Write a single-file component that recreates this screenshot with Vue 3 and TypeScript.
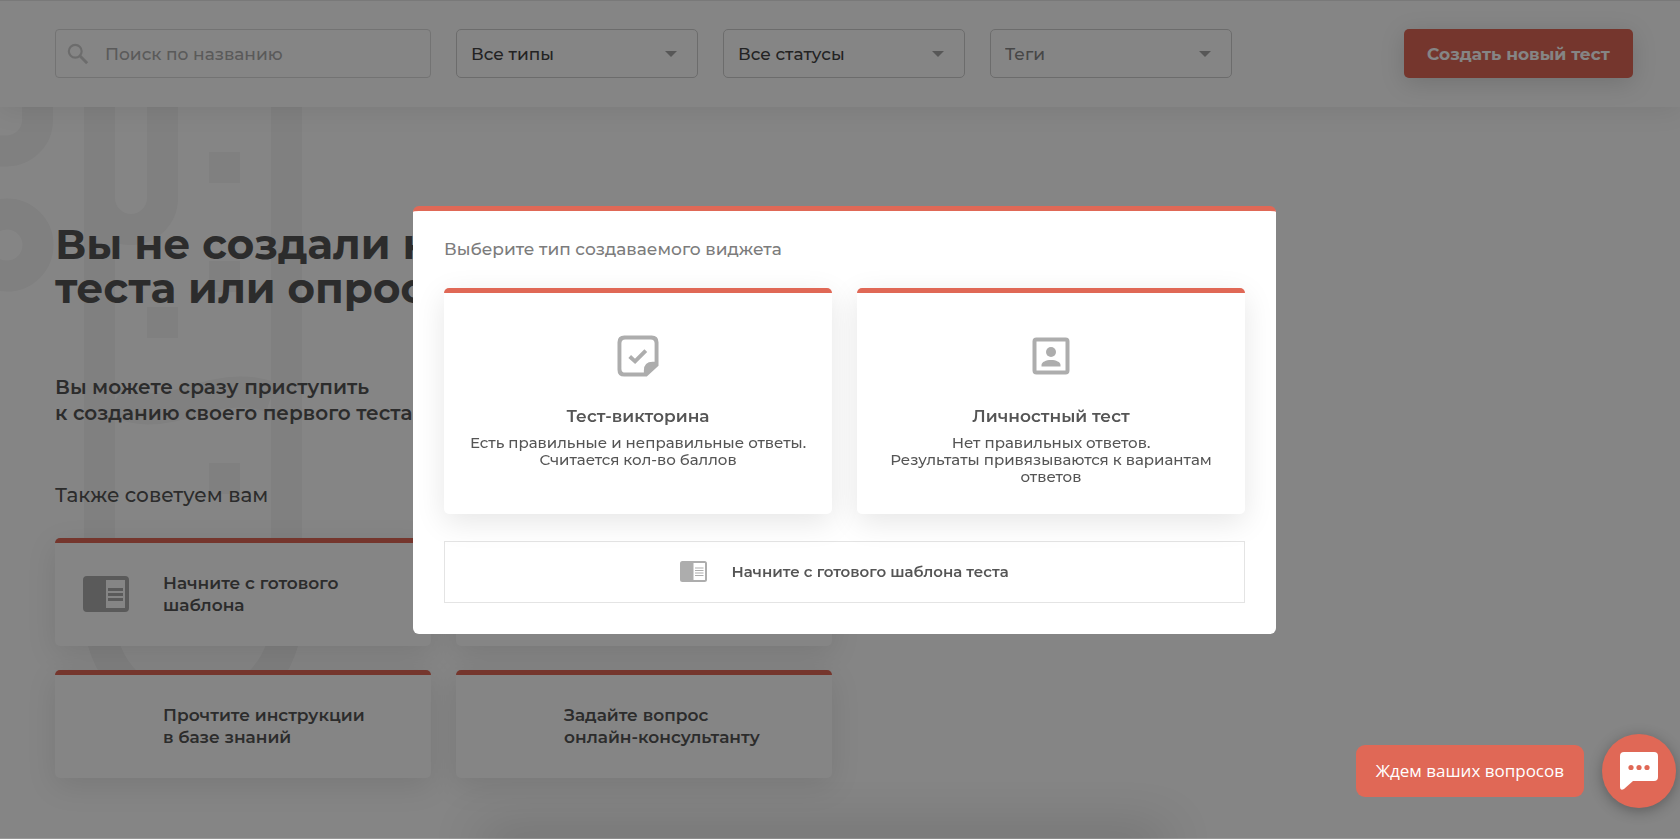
<script setup lang="ts">
import { ref } from 'vue'

interface Tip {
  lines: string[]
  icon: boolean
}
interface WidgetType {
  id: string
  title: string
  lines: string[]
}

const search = ref('')
const filters = [
  { id: 'types', label: 'Тип', value: 'Все типы', muted: false },
  { id: 'statuses', label: 'Статус', value: 'Все статусы', muted: false },
  { id: 'tags', label: 'Теги', value: 'Теги', muted: true },
]
const tips: Tip[] = [
  { lines: ['Начните с готового', 'шаблона'], icon: true },
  { lines: [], icon: false },
  { lines: ['Прочтите инструкции', 'в базе знаний'], icon: false },
  { lines: ['Задайте вопрос', 'онлайн-консультанту'], icon: false },
]
const widgetTypes: WidgetType[] = [
  {
    id: 'quiz',
    title: 'Тест-викторина',
    lines: ['Есть правильные и неправильные ответы.', 'Считается кол-во баллов'],
  },
  {
    id: 'personality',
    title: 'Личностный тест',
    lines: ['Нет правильных ответов.', 'Результаты привязываются к вариантам', 'ответов'],
  },
]
</script>

<template>
  <div class="page">
    <header class="toolbar">
      <div class="filters">
        <label class="search">
          <svg viewBox="0 0 24 24" aria-hidden="true">
            <circle cx="9" cy="9" r="7" fill="none" stroke="currentColor" stroke-width="2.4" />
            <path d="M14 14 L22 22" stroke="currentColor" stroke-width="3.2" />
          </svg>
          <input v-model="search" type="text" placeholder="Поиск по названию" aria-label="Поиск по названию" />
        </label>
        <div v-for="f in filters" :key="f.id" class="select">
          <select :id="f.id" :aria-label="f.label" :class="{ muted: f.muted }">
            <option>{{ f.value }}</option>
          </select>
          <svg viewBox="0 0 12 6" aria-hidden="true"><path d="M0 0H12L6 6Z" fill="currentColor" /></svg>
        </div>
      </div>
      <button type="button" class="create">Создать новый тест</button>
    </header>

    <main class="content">
      <svg class="pattern" viewBox="0 0 320 732" aria-hidden="true">
        <g fill="none" stroke="currentColor" stroke-width="31">
          <path d="M99.5 0V510A93.5 93.5 0 0 0 286.5 510V0" />
          <path d="M162.5 0V91A31.5 31.5 0 0 1 99.5 91" />
          <path d="M37.5 0V13A31 31 0 0 1 7 44H0" />
          <circle cx="7" cy="138" r="31" />
          <path d="M115 294Q131 302 148 302C182 302 206 285 240 285Q256 285 271 290" />
        </g>
        <path d="M209 45h31v31h-31zM209 154h31v31h-31zM147 200h31v31h-31zM209 356h31v31h-31z" fill="currentColor" />
      </svg>
      <h1>Вы не создали ни одного<br />теста или опроса</h1>
      <p class="lead">Вы можете сразу приступить<br />к созданию своего первого теста</p>
      <h2>Также советуем вам</h2>
      <div class="tips">
        <a v-for="(tip, i) in tips" :key="i" href="#" class="tip">
          <span class="tip-icon">
            <svg v-if="tip.icon" viewBox="0 0 46 36" aria-hidden="true">
              <path
                fill-rule="evenodd"
                fill="currentColor"
                d="M4 0H42Q46 0 46 4V32Q46 36 42 36H4Q0 36 0 32V4Q0 0 4 0ZM23 4V32H42V4ZM25 12H40V15H25ZM25 17H40V20H25ZM25 22H40V25H25Z"
              />
            </svg>
          </span>
          <span class="tip-text"><span v-for="line in tip.lines" :key="line">{{ line }}</span></span>
        </a>
      </div>
    </main>
  </div>

  <div class="overlay">
    <section class="modal" role="dialog" aria-modal="true" aria-labelledby="modal-title">
      <h3 id="modal-title">Выберите тип создаваемого виджета</h3>
      <div class="types">
        <button v-for="t in widgetTypes" :key="t.id" type="button" class="type">
          <svg v-if="t.id === 'quiz'" class="type-icon" viewBox="-0.5 -0.5 43 43" aria-hidden="true">
            <path
              fill="currentColor"
              fill-rule="evenodd"
              d="M7 0H35Q42 0 42 7V31L30 42H7Q0 42 0 35V7Q0 0 7 0ZM8 4Q4 4 4 8V34Q4 38 8 38H27V36Q27 27 36 27H38V8Q38 4 34 4Z"
            />
            <path d="M12.5 21.5L18 26.5L29 15.5" fill="none" stroke="currentColor" stroke-width="4" />
          </svg>
          <svg v-else class="type-icon" viewBox="0 0 42 42" aria-hidden="true">
            <rect x="4.5" y="4.5" width="33" height="33" rx="2" fill="none" stroke="currentColor" stroke-width="4" />
            <circle cx="21" cy="17" r="5" fill="currentColor" />
            <path d="M11.500 31.500V30C11.500 27 16 25 21 25S30.500 27 30.500 30V31.500Z" fill="currentColor" />
          </svg>
          <strong>{{ t.title }}</strong>
          <span v-for="line in t.lines" :key="line" class="type-line">{{ line }}</span>
        </button>
      </div>
      <button type="button" class="template">
        <svg viewBox="0 0 27 21" aria-hidden="true">
          <path
            fill-rule="evenodd"
            fill="currentColor"
            d="M2.500 0H24.500Q27 0 27 2.500V18.500Q27 21 24.500 21H2.500Q0 21 0 18.500V2.500Q0 0 2.500 0ZM13.500 2V19H25V2ZM15 6.500H23.500V7.500H15ZM15 9H23.500V10H15ZM15 11.500H23.500V12.500H15ZM15 14H23.500V15H15Z"
          />
        </svg>
        Начните с готового шаблона теста
      </button>
    </section>
  </div>

  <div class="dock-shadow"></div>

  <div class="chat">
    <span class="chat-hint">Ждем ваших вопросов</span>
    <button type="button" class="chat-button" aria-label="Открыть чат">
      <svg viewBox="0 0 38 38" aria-hidden="true">
        <path d="M4 0H34Q38 0 38 4V25Q38 29 34 29H13L4 37Q0 39 0 35V4Q0 0 4 0Z" fill="#fff" />
        <g fill="#e06856">
          <circle cx="11" cy="15.500" r="2.600" />
          <circle cx="19" cy="15.500" r="2.600" />
          <circle cx="27" cy="15.500" r="2.600" />
        </g>
      </svg>
    </button>
  </div>
</template>

<style>
body {
  margin: 0;
  background: #fff;
  overflow: hidden;
}
</style>

<style scoped>
.page,
.overlay {
  font-family: Montserrat, Inter, 'Noto Sans', sans-serif;
  color: #555;
}
.page *,
.overlay *,
.chat * {
  box-sizing: border-box;
}
button,
input,
select {
  font: inherit;
  color: inherit;
}
.page {
  height: 100vh;
  display: flex;
  flex-direction: column;
  overflow: hidden;
}
.toolbar {
  position: relative;
  z-index: 1;
  display: flex;
  align-items: center;
  justify-content: space-between;
  gap: 24px;
  padding: 28px 47px 29px 55px;
  border-top: 1px solid #e8e8e8;
  background: #fff;
  box-shadow: 0 4px 24px rgba(0, 0, 0, 0.08);
}
.filters {
  flex: 0 1 1177px;
  display: grid;
  grid-template-columns: 376fr 242fr 242fr 242fr;
  gap: 25px;
}
.search,
.select {
  position: relative;
  display: flex;
  align-items: center;
  height: 49px;
  border: 1px solid #dcdcdc;
  border-radius: 4px;
  font-size: 17px;
  font-weight: 500;
}
.search {
  gap: 16px;
  padding-left: 11px;
  color: #d0d0d0;
}
.search svg {
  flex: none;
  width: 22px;
  height: 22px;
}
.search input {
  flex: 1;
  min-width: 0;
  border: 0;
  outline: 0;
  background: none;
  padding: 0;
}
.search input::placeholder {
  color: #acacac;
  opacity: 1;
}
.select {
  border-color: #d0d0d0;
  border-radius: 5px;
}
.select select {
  width: 100%;
  height: 100%;
  padding: 0 40px 0 14px;
  border: 0;
  appearance: none;
  background: none;
  color: #444;
}
.select select.muted {
  color: #888;
}
.select svg {
  position: absolute;
  right: 20px;
  width: 12px;
  height: 6px;
  color: #a8a8a8;
  pointer-events: none;
}
.create {
  width: 229px;
  height: 49px;
  border: 0;
  border-radius: 5px;
  background: #e06856;
  box-shadow: 0 5px 24px rgba(0, 0, 0, 0.15);
  color: #fff;
  font-size: 17px;
  font-weight: 700;
  white-space: nowrap;
}
.content {
  position: relative;
  flex: 1;
  padding: 115px 56px 0 55px;
}
.pattern {
  position: absolute;
  left: 0;
  top: 0;
  width: 320px;
  height: 732px;
  color: #f5f5f5;
}
.content > :not(.pattern) {
  position: relative;
}
h1 {
  margin: 0;
  font-size: 42px;
  line-height: 44px;
  font-weight: 700;
}
.lead {
  margin: 64px 0 0;
  font-size: 20px;
  line-height: 26px;
  font-weight: 600;
}
h2 {
  margin: 56px 0 0;
  font-size: 20px;
  line-height: 26px;
  font-weight: 500;
}
.tips {
  display: grid;
  grid-template-columns: repeat(2, minmax(0, 376px));
  gap: 24px 25px;
  margin-top: 30px;
}
.tip {
  display: flex;
  align-items: center;
  height: 108px;
  border-top: 5px solid #e06856;
  border-radius: 5px;
  background: #fff;
  box-shadow: 0 8px 30px rgba(0, 0, 0, 0.1);
  padding: 0 28px 2px;
  color: inherit;
  text-decoration: none;
  font-size: 17px;
  line-height: 22px;
  font-weight: 600;
}
.tip-icon {
  flex: none;
  width: 80px;
  color: #adadad;
}
.tip-icon svg {
  display: block;
  width: 46px;
  height: 36px;
}
.tip-text {
  display: grid;
}
.overlay {
  position: fixed;
  inset: 0;
  z-index: 2;
  display: flex;
  align-items: center;
  justify-content: center;
  padding: 2px 0 0 9px;
  border-bottom: 1px solid rgba(255, 255, 255, 0.15);
  background: rgba(0, 0, 0, 0.48);
}
.modal {
  width: 863px;
  padding: 26px 31px 31px;
  border-top: 5px solid #e06856;
  border-radius: 6px;
  background: #fff;
}
h3 {
  margin: 0;
  font-size: 17px;
  line-height: 24px;
  font-weight: 500;
  color: #7c7c7c;
}
.types {
  display: grid;
  grid-template-columns: 1fr 1fr;
  gap: 25px;
  margin: 27px 0;
}
.type {
  display: flex;
  flex-direction: column;
  align-items: center;
  height: 226px;
  padding: 42px 12px 0;
  border: 0;
  border-top: 5px solid #e06856;
  border-radius: 5px;
  background: #fff;
  box-shadow: 0 8px 30px rgba(0, 0, 0, 0.1);
}
.type-icon {
  flex: none;
  width: 42px;
  height: 42px;
  color: #adadad;
}
.type strong {
  margin: 27px 0 6px;
  font-size: 17px;
  line-height: 24px;
  font-weight: 600;
}
.type-line {
  font-size: 15px;
  line-height: 17px;
  font-weight: 500;
}
.template {
  display: flex;
  align-items: center;
  justify-content: center;
  gap: 24px;
  width: 100%;
  height: 62px;
  padding: 0 0 2px;
  border: 1px solid #e4e4e4;
  background: #fff;
  font-size: 15px;
  font-weight: 600;
}
.template svg {
  width: 27px;
  height: 21px;
  color: #adadad;
}
.dock-shadow {
  position: fixed;
  z-index: 3;
  left: 29%;
  right: 31%;
  bottom: -10px;
  height: 10px;
  box-shadow: 0 0 50px 5px rgba(0, 0, 0, 0.25);
}
.chat {
  position: fixed;
  z-index: 4;
  right: 4px;
  bottom: 31px;
  display: flex;
  align-items: center;
  gap: 18px;
  font-family: 'Open Sans', 'Noto Sans', sans-serif;
}
.chat-hint {
  padding: 14px 20px;
  border-radius: 9px;
  background: #e06856;
  color: #fff;
  font-size: 17px;
  line-height: 24px;
}
.chat-button {
  display: grid;
  place-items: center;
  width: 74px;
  height: 74px;
  padding: 0;
  border: 0;
  border-radius: 50%;
  background: #e06856;
  box-shadow: 0 3px 14px rgba(0, 0, 0, 0.3);
}
.chat-button svg {
  width: 38px;
  height: 38px;
}
</style>
